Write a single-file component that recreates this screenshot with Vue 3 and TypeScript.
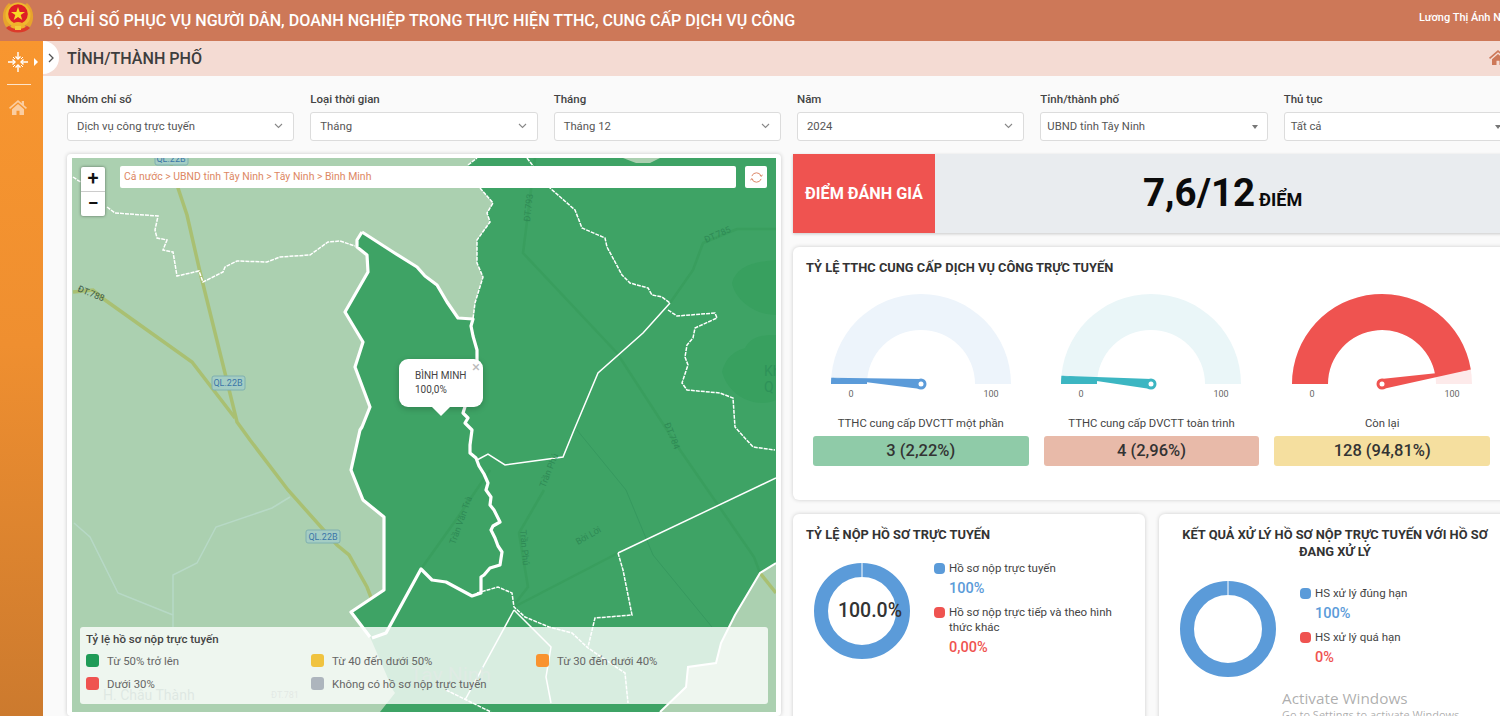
<script setup lang="ts">
// du lieu bo loc
const filters = [
  { label: 'Nhóm chỉ số', value: 'Dịch vụ công trực tuyến', kind: 'chevron' },
  { label: 'Loại thời gian', value: 'Tháng', kind: 'chevron' },
  { label: 'Tháng', value: 'Tháng 12', kind: 'chevron' },
  { label: 'Năm', value: '2024', kind: 'chevron' },
  { label: 'Tỉnh/thành phố', value: 'UBND tỉnh Tây Ninh', kind: 'caret' },
  { label: 'Thủ tục', value: 'Tất cả', kind: 'caret' },
]

const legend = [
  { label: 'Từ 50% trở lên', color: '#1f9b57' },
  { label: 'Từ 40 đến dưới 50%', color: '#f0c33f' },
  { label: 'Từ 30 đến dưới 40%', color: '#f9932f' },
  { label: 'Dưới 30%', color: '#ef5350' },
  { label: 'Không có hồ sơ nộp trực tuyến', color: '#adb5bd' },
]

// toa do ban do tinh theo trang, viewBox bat dau tu 72 158
const darkArea =
  '362,232 393,252 417,267 437,285 458,318 473,319 475,303 483,277 477,263 477,240 490,222 487,213 493,203 480,188 468,165 477,158 776,158 776,563 760,573 735,615 721,643 716,663 688,667 686,687 660,712 380,712 395,693 393,690 380,660 370,637 351,612 384,590 384,517 363,500 351,470 360,430 362,427 370,407 355,367 363,342 345,312 368,272 367,255 357,247 357,240'

const thickLines = [
  '362,232 393,252 417,267 425,276 437,285 447,302 458,318 473,319 471,326 473,336 477,350 477,363 472,385 463,413 468,418 465,423 472,430 470,445 470,453 476,458 479,466 484,474 488,483 486,490 491,497 490,505 494,510 500,522 493,526 491,530 495,538 498,546 502,552 500,565 490,568 484,575 481,577 481,593 472,596 446,582 432,580 421,569 386,633 372,638',
  '362,232 357,240 357,247 367,255 368,272 345,312 363,342 355,367 370,407 362,427 360,430 351,470 363,500 384,517 384,590 351,612 370,637',
]
const mediumLines = ['776,563 760,573 735,615 721,643 716,663 688,667 686,687 660,712']
const solidLines = [
  '670,303 643,333 598,373 574,430 563,457 505,465 488,454 477,460',
  '776,478 618,553',
  '514,610 465,700',
  '514,610 551,647 546,677 551,703',
]
const dashedLines = [
  '73,177 82,183',
  '107,207 115,213 158,216 155,230 157,238 167,240 163,250 173,252 177,276 199,271 203,282 223,272 225,267 237,261 267,262 280,257 310,255 328,242 340,241 355,246',
  '468,165 477,158',
  '480,188 493,203 487,213 490,222 477,240 477,263 483,277 475,303 473,319',
  '527,158 550,188 575,210 582,228 605,238 607,247 622,275 630,283 648,288 652,295 662,297 670,303',
  '668,310 677,316 715,313 717,318 695,328 693,338 687,345 685,357 688,365 682,383 687,390 720,393 733,398 735,427 753,447 775,450',
  '618,553 623,570 632,615 595,618 588,647',
  '477,593 498,587 512,593 514,607 525,617 549,627 572,633 588,648 625,673 628,703',
  '446,690 491,712',
]
const lightRoads = [
  '171,165 178,188 187,215 200,272 225,373 237,422 250,440 288,490 337,545 349,555 367,587 381,623',
  '73,292 93,290 105,300 192,362 235,418',
  '760,573 776,593',
]
const darkRoads = [
  '535,158 523,253 617,353 680,450 754,557 760,573',
  '670,303 693,270 703,243 737,229 776,229',
  '514,607 618,553',
  '421,569 458,517 490,470',
  '544,490 519,533 528,587 514,605',
]
const darkStreams = ['577,430 626,490 653,555 712,627']
const streams = [
  '290,497 272,508 216,527 197,563 173,575 173,627',
  '74,523 90,537 118,593 173,615',
]

// dong ho: mau va ty le lay theo so lieu
const gauges = [
  { label: 'TTHC cung cấp DVCTT một phần', value: '3 (2,22%)', rate: 0.0222, color: '#5b9bd9', bg: '#edf4fb', box: '#8fcba8' },
  { label: 'TTHC cung cấp DVCTT toàn trình', value: '4 (2,96%)', rate: 0.0296, color: '#3cb6c2', bg: '#eaf6f8', box: '#e8baa9' },
  { label: 'Còn lại', value: '128 (94,81%)', rate: 0.9481, color: '#ef5350', bg: '#fdeaea', box: '#f5df9f' },
]

const cx = 100
const cy = 96
const pt = (r: number, f: number) => {
  const a = Math.PI * (1 - f)
  return `${(cx + r * Math.cos(a)).toFixed(2)} ${(cy - r * Math.sin(a)).toFixed(2)}`
}
const band = (from: number, to: number) =>
  `M${pt(90, from)} A90 90 0 0 1 ${pt(90, to)} L${pt(54, to)} A54 54 0 0 0 ${pt(54, from)} Z`
const needle = (f: number) => {
  const a = Math.PI * (1 - f)
  const dx = 5 * Math.sin(a)
  const dy = 5 * Math.cos(a)
  return `M${cx - dx} ${cy - dy} L${pt(90, f)} L${cx + dx} ${cy + dy} Z`
}

const donuts = [
  {
    title: 'TỶ LỆ NỘP HỒ SƠ TRỰC TUYẾN',
    center: '100.0%',
    cls: 'card-left',
    items: [
      { label: 'Hồ sơ nộp trực tuyến', value: '100%', color: '#5b9bd9' },
      { label: 'Hồ sơ nộp trực tiếp và theo hình thức khác', value: '0,00%', color: '#ef5350' },
    ],
  },
  {
    title: 'KẾT QUẢ XỬ LÝ HỒ SƠ NỘP TRỰC TUYẾN VỚI HỒ SƠ ĐANG XỬ LÝ',
    center: '',
    cls: 'card-right',
    items: [
      { label: 'HS xử lý đúng hạn', value: '100%', color: '#5b9bd9' },
      { label: 'HS xử lý quá hạn', value: '0%', color: '#ef5350' },
    ],
  },
]
</script>

<template>
  <div class="app">
    <header class="topbar">
      <svg class="emblem" width="32" height="32" viewBox="0 0 32 32">
        <path d="M4 25 C-1 17 0 7 7 1 L10 4 C6 9 6 17 9 23 Z" fill="#e8a32c" />
        <path d="M28 25 C33 17 32 7 25 1 L22 4 C26 9 26 17 23 23 Z" fill="#e8a32c" />
        <circle cx="16" cy="13" r="12.500" fill="#efb92f" />
        <circle cx="16" cy="12" r="9.800" fill="#de1f26" />
        <path d="M16 5l1.700 5h5.300l-4.300 3.100 1.600 5-4.300-3.100-4.300 3.100 1.600-5L9 10h5.300z" fill="#f8d827" />
        <path d="M9 24 C11 18.500 21 18.500 23 24 L24 27 H8 Z" fill="#f0b22c" />
        <path d="M4 26 C10 32 22 32 28 26 L25 24 C21 28 11 28 7 24 Z" fill="#dc3a2a" />
        <rect x="13" y="24" width="6" height="4" fill="#f4c93c" />
      </svg>
      <span class="site-title">BỘ CHỈ SỐ PHỤC VỤ NGƯỜI DÂN, DOANH NGHIỆP TRONG THỰC HIỆN TTHC, CUNG CẤP DỊCH VỤ CÔNG</span>
      <span class="user-name">Lương Thị Ánh Nguyệt</span>
    </header>

    <div class="body-row">
      <aside class="sidebar">
        <div class="side-top">
          <svg width="22" height="22" viewBox="0 0 22 22" fill="none" stroke="#fff" stroke-width="1.400">
            <path d="M11 1v7M11 14v7M1 11h7M14 11h7" />
            <path d="M8.500 5.500L11 8l2.500-2.500M8.500 16.500L11 14l2.500 2.500M5.500 8.500L8 11l-2.500 2.500M16.500 8.500L14 11l2.500 2.500" />
            <path d="M6 6l2 2M16 6l-2 2M6 16l2-2M16 16l-2-2" stroke-width="1" />
          </svg>
          <i class="side-arrow"></i>
        </div>
        <div class="side-line"></div>
        <svg class="side-home" width="18" height="16" viewBox="0 0 24 21" fill="#fbcda0">
          <path d="M12 1L0 11.500l1.500 1.600L12 4l10.500 9.100L24 11.500l-4-3.500V2.500h-3V5.400z" />
          <path d="M4 13.500L12 6.500l8 7V21h-6v-5.500h-4V21H4z" />
        </svg>
      </aside>

      <main class="main">
        <div class="collapse-tab">
          <svg width="8" height="10" viewBox="0 0 8 10" fill="none" stroke="#555" stroke-width="1.300">
            <path d="M2 1l4 4-4 4" />
          </svg>
        </div>
        <div class="page-bar">
          <h1>TỈNH/THÀNH PHỐ</h1>
          <svg class="bar-home" width="18" height="16" viewBox="0 0 24 21" fill="#cd7858">
            <path d="M12 1L0 11.500l1.500 1.600L12 4l10.500 9.100L24 11.500l-4-3.500V2.500h-3V5.400z" />
            <path d="M4 13.500L12 6.500l8 7V21h-6v-5.500h-4V21H4z" />
          </svg>
        </div>

        <div class="content">
          <div class="filters">
            <div v-for="f in filters" :key="f.label" class="filter">
              <label>{{ f.label }}</label>
              <div class="select" :class="f.kind">
                <span>{{ f.value }}</span>
                <svg v-if="f.kind === 'chevron'" width="9" height="6" viewBox="0 0 9 6" fill="none" stroke="#888" stroke-width="1.100">
                  <path d="M1 1l3.500 3.500L8 1" />
                </svg>
                <i v-else class="caret-icon"></i>
              </div>
            </div>
          </div>

          <div class="columns">
            <section class="map-card">
              <div class="map">
                <svg class="map-svg" width="704" height="554" viewBox="72 158 704 554">
                  <rect x="72" y="158" width="704" height="554" fill="#abd0b0" />
                  <polyline v-for="s in streams" :key="s" :points="s" fill="none" stroke="#b7d9c6" stroke-width="1.500" />
                  <polyline v-for="r in lightRoads" :key="r" :points="r" fill="none" stroke="#a9c072" stroke-width="3.500" />
                  <polygon :points="darkArea" fill="#3ea365" />
                  <polygon points="623,158 660,158 650,163 636,163" fill="#abd0b0" />
                  <path d="M732 283 C736 268 750 262 776 260 V315 C755 315 735 300 732 283Z" fill="#38a05f" />
                  <path d="M722 372 C726 355 738 350 745 348 C752 335 765 335 776 335 V400 C760 408 730 400 722 372Z" fill="#38a05f" />
                  <polyline v-for="r in darkStreams" :key="r" :points="r" fill="none" stroke="#36995f" stroke-width="1" />
                  <polyline v-for="r in darkRoads" :key="r" :points="r" fill="none" stroke="#399e5e" stroke-width="2.500" />
                  <polyline v-for="l in dashedLines" :key="l" :points="l" fill="none" stroke="#fff" stroke-width="1.500" stroke-dasharray="4 1" />
                  <polyline v-for="l in solidLines" :key="l" :points="l" fill="none" stroke="#fff" stroke-width="1.500" />
                  <polyline v-for="l in mediumLines" :key="l" :points="l" fill="none" stroke="#fff" stroke-width="2" />
                  <polyline v-for="l in thickLines" :key="l" :points="l" fill="none" stroke="#fff" stroke-width="3.200" stroke-linejoin="round" />
                  <g class="shield">
                    <rect x="155" y="151" width="33" height="14" rx="2" />
                    <rect x="212" y="376" width="33" height="14" rx="2" />
                    <rect x="306" y="530" width="34" height="13" rx="2" />
                  </g>
                  <g class="shield-text">
                    <text x="171" y="162">QL.22B</text>
                    <text x="228" y="386">QL.22B</text>
                    <text x="323" y="540">QL.22B</text>
                  </g>
                  <g class="road-dark">
                    <text transform="translate(77 291) rotate(22)">ĐT.788</text>
                  </g>
                  <g class="road-green">
                    <text transform="translate(530 222) rotate(-84)">ĐT.793</text>
                    <text transform="translate(706 243) rotate(-24)">ĐT.785</text>
                    <text transform="translate(664 424) rotate(68)">ĐT.784</text>
                    <text transform="translate(455 545) rotate(-70)">Trần Văn Trà</text>
                    <text transform="translate(545 488) rotate(-68)">Trần Phú</text>
                    <text transform="translate(520 530) rotate(85)">Trần Phú</text>
                    <text transform="translate(578 545) rotate(-30)">Bời Lời</text>
                    <text class="place" x="764" y="376">Kh</text>
                    <text class="place" x="764" y="392">Q</text>
                  </g>
                  <text class="place-light" x="103" y="700">H. Châu Thành</text>
                  <text class="place-light big" x="410" y="682">Tây Ninh</text>
                  <text class="road-faint" x="271" y="698">ĐT.781</text>
                </svg>

                <div class="zoom-ctrl">
                  <span>+</span>
                  <span>−</span>
                </div>
                <div class="crumb">Cả nước &gt; UBND tỉnh Tây Ninh &gt; Tây Ninh &gt; Bình Minh</div>
                <div class="reload">
                  <svg width="13" height="13" viewBox="0 0 14 14" fill="none" stroke="#d9805e" stroke-width="1">
                    <path d="M2 5.500A5.300 5.300 0 0 1 12 5.500M12 8.500A5.300 5.300 0 0 1 2 8.500" />
                    <path d="M10.500 4.500L12.300 5.800L13.300 4M3.500 9.500L1.700 8.200L.7 10" />
                  </svg>
                </div>
                <div class="popup">
                  <span class="popup-close">×</span>
                  <div>BÌNH MINH</div>
                  <div>100,0%</div>
                </div>
                <div class="legend">
                  <div class="legend-title">Tỷ lệ hồ sơ nộp trực tuyến</div>
                  <div class="legend-grid">
                    <div v-for="l in legend" :key="l.label" class="legend-item">
                      <i :style="{ background: l.color }"></i>
                      <span>{{ l.label }}</span>
                    </div>
                  </div>
                </div>
              </div>
            </section>

            <div class="right-col">
              <section class="score">
                <div class="score-label">ĐIỂM ĐÁNH GIÁ</div>
                <div class="score-value"><b>7,6/12</b> <span>ĐIỂM</span></div>
              </section>

              <section class="card gauge-card">
                <h2>TỶ LỆ TTHC CUNG CẤP DỊCH VỤ CÔNG TRỰC TUYẾN</h2>
                <div class="gauge-row">
                  <div v-for="g in gauges" :key="g.label" class="gauge">
                    <svg width="200" height="120" viewBox="0 0 200 120">
                      <path :d="band(0, 1)" :fill="g.bg" />
                      <path :d="band(0, g.rate)" :fill="g.color" />
                      <path :d="needle(g.rate)" :fill="g.color" />
                      <circle :cx="cx" :cy="cy" r="5.500" :fill="g.color" />
                      <circle :cx="cx" :cy="cy" r="2.500" fill="#fff" />
                      <text class="tick" x="30" y="109">0</text>
                      <text class="tick" x="170" y="109">100</text>
                    </svg>
                    <div class="gauge-label">{{ g.label }}</div>
                    <div class="gauge-value" :style="{ background: g.box }">{{ g.value }}</div>
                  </div>
                </div>
              </section>

              <div class="donut-row">
                <section v-for="d in donuts" :key="d.title" class="card donut-card" :class="d.cls">
                  <h2>{{ d.title }}</h2>
                  <div class="donut-body">
                    <div class="donut">
                      <svg width="96" height="96" viewBox="0 0 96 96">
                        <circle cx="48" cy="48" r="41" fill="none" stroke="#5b9bd9" stroke-width="14" />
                        <path d="M48 0v14" stroke="#fff" stroke-width="1" />
                      </svg>
                      <span v-if="d.center" class="donut-center">{{ d.center }}</span>
                    </div>
                    <ul class="donut-legend">
                      <li v-for="it in d.items" :key="it.label">
                        <i :style="{ background: it.color }"></i>
                        <div>
                          <p>{{ it.label }}</p>
                          <strong :style="{ color: it.color }">{{ it.value }}</strong>
                        </div>
                      </li>
                    </ul>
                  </div>
                </section>
              </div>
            </div>
          </div>
        </div>
      </main>
    </div>

    <div class="activate">
      <div>Activate Windows</div>
      <small>Go to Settings to activate Windows.</small>
    </div>
  </div>
</template>

<style>
html,
body {
  margin: 0;
  overflow: hidden;
}
</style>

<style scoped>
.app {
  position: relative;
  width: 1500px;
  height: 716px;
  overflow: hidden;
  font-family: Roboto, "Liberation Sans", sans-serif;
  color: #333;
  background: #fafafa;
}

.topbar {
  height: 41px;
  background: #cd7858;
  display: flex;
  align-items: center;
  color: #fff;
  white-space: nowrap;
}

.emblem {
  margin: -6px 9px 0 2px;
  flex: none;
}

.site-title {
  font-size: 16.100px;
  font-weight: 500;
}

.user-name {
  position: absolute;
  left: 1419px;
  top: 11px;
  font-size: 11px;
  font-weight: 500;
}

.body-row {
  display: flex;
  height: 675px;
}

.sidebar {
  width: 43px;
  flex: none;
  background: linear-gradient(180deg, #f8962f 0%, #ef8f30 45%, #cc7a2e 100%);
  display: flex;
  flex-direction: column;
  align-items: center;
}

.side-top {
  position: relative;
  width: 43px;
  height: 43px;
  padding: 10px 0 0 7px;
  box-sizing: border-box;
}

.side-arrow {
  position: absolute;
  left: 34px;
  top: 17px;
  border-left: 4px solid #fff;
  border-top: 4px solid transparent;
  border-bottom: 4px solid transparent;
}

.side-line {
  width: 24px;
  height: 1px;
  background: rgba(255, 255, 255, 0.75);
  margin-right: 5px;
}

.side-home {
  margin-top: 14px;
  margin-right: 7px;
}

.main {
  position: relative;
  flex: 1;
  min-width: 0;
}

.collapse-tab {
  position: absolute;
  z-index: 2;
  left: 0;
  top: 0;
  width: 16px;
  height: 33px;
  background: #fff;
  border-radius: 0 17px 17px 0;
  display: flex;
  align-items: center;
  justify-content: center;
}

.page-bar {
  height: 35px;
  background: #f4dbd3;
  display: flex;
  align-items: center;
  padding-left: 24px;
  position: relative;
}

.page-bar h1 {
  margin: 0;
  font-size: 16.100px;
  font-weight: 500;
  color: #3d3d3d;
}

.bar-home {
  position: absolute;
  left: 1446px;
  top: 8px;
}

.content {
  width: 1444px;
  padding: 16px 0 0 24px;
}

.filters {
  display: grid;
  grid-template-columns: repeat(6, 1fr);
  gap: 16px;
}

.filter label {
  display: block;
  font-size: 11.500px;
  font-weight: 500;
  color: #444;
  line-height: 14px;
  margin-bottom: 6px;
}

.select {
  height: 29px;
  box-sizing: border-box;
  background: #fff;
  border: 1px solid #dcdcdc;
  border-radius: 3px;
  font-size: 11.300px;
  color: #555;
  display: flex;
  align-items: center;
  justify-content: space-between;
  padding: 0 10px 1px 9px;
}

.select.caret {
  padding: 0 9px 0 6px;
}

.caret-icon {
  border-top: 4px solid #777;
  border-left: 3.500px solid transparent;
  border-right: 3.500px solid transparent;
}

.columns {
  display: grid;
  grid-template-columns: 714px 718px;
  gap: 12px;
  margin-top: 13px;
}

.map-card {
  height: 562px;
  padding: 4px 5px 0 5px;
  box-sizing: border-box;
  background: #fff;
  border-radius: 4px;
  box-shadow: 0 0 4px rgba(0, 0, 0, 0.2);
}

.map {
  position: relative;
  width: 704px;
  height: 554px;
  overflow: hidden;
}

.map-svg {
  display: block;
}

.shield rect {
  fill: #a4cdc4;
  stroke: #7fb0b0;
}

.shield-text text {
  font-size: 9px;
  fill: #3b76a8;
  text-anchor: middle;
}

.road-dark text {
  font-size: 9px;
  fill: #3d5b48;
}

.road-green text {
  font-size: 9px;
  fill: #2e8a55;
}

.road-green text.place {
  font-size: 14px;
  fill: #2e9259;
}

.place-light {
  font-size: 14px;
  fill: #5a8a70;
}

.place-light.big {
  font-size: 21px;
  fill: #5f9a78;
}

.road-faint {
  font-size: 9px;
  fill: #6f8f78;
}

.zoom-ctrl {
  position: absolute;
  left: 9px;
  top: 9px;
  width: 24px;
  background: #fff;
  border-radius: 2px;
  box-shadow: 0 0 3px rgba(0, 0, 0, 0.5);
  color: #111;
}

.zoom-ctrl span {
  display: block;
  height: 24px;
  line-height: 23px;
  text-align: center;
  font-size: 20px;
  font-weight: 500;
}

.zoom-ctrl span:first-child {
  border-bottom: 1px solid #ccc;
}

.crumb {
  position: absolute;
  left: 48px;
  top: 8px;
  width: 616px;
  height: 22px;
  box-sizing: border-box;
  padding-left: 4px;
  line-height: 22px;
  background: #fff;
  border-radius: 2px;
  font-size: 10.450px;
  color: #dd8763;
}

.reload {
  position: absolute;
  left: 673px;
  top: 8px;
  width: 22px;
  height: 22px;
  background: #fff;
  border-radius: 2px;
  display: flex;
  align-items: center;
  justify-content: center;
}

.popup {
  position: absolute;
  left: 327px;
  top: 201px;
  width: 84px;
  height: 48px;
  box-sizing: border-box;
  padding: 10px 0 0 16px;
  background: #fff;
  border-radius: 9px;
  box-shadow: 0 2px 6px rgba(0, 0, 0, 0.2);
  font-size: 10px;
  line-height: 14px;
  color: #444;
}

.popup::after {
  content: "";
  position: absolute;
  left: 33px;
  top: 48px;
  border-top: 9px solid #fff;
  border-left: 9px solid transparent;
  border-right: 9px solid transparent;
}

.popup-close {
  position: absolute;
  right: 3px;
  top: 1px;
  font-size: 15px;
  color: #bbb;
}

.legend {
  position: absolute;
  left: 8px;
  top: 469px;
  width: 688px;
  height: 77px;
  box-sizing: border-box;
  padding: 5px 6px;
  background: rgba(255, 255, 255, 0.8);
  border-radius: 3px;
}

.legend-title {
  font-size: 11.500px;
  font-weight: 500;
  line-height: 14px;
  color: #444;
  margin-bottom: 8px;
}

.legend-grid {
  display: grid;
  grid-template-columns: 225px 225px 225px;
  row-gap: 10px;
}

.legend-item {
  display: flex;
  align-items: center;
  gap: 8px;
  height: 13px;
  font-size: 11.400px;
  color: #666;
}

.legend-item i {
  width: 13px;
  height: 13px;
  border-radius: 3px;
  flex: none;
}

.right-col {
  display: flex;
  flex-direction: column;
  gap: 14px;
}

.score {
  height: 79px;
  display: flex;
  background: #e9ecef;
  box-shadow: 0 1px 3px rgba(0, 0, 0, 0.2);
}

.score-label {
  width: 142px;
  background: #ef5350;
  color: #fff;
  font-size: 16.200px;
  font-weight: 700;
  display: flex;
  align-items: center;
  justify-content: center;
  white-space: nowrap;
}

.score-value {
  flex: 1;
  padding: 16px 0 0 208px;
  color: #0b0b0b;
  white-space: nowrap;
}

.score-value b {
  font-size: 38.500px;
  font-weight: 700;
}

.score-value span {
  font-size: 18px;
  font-weight: 700;
}

.card {
  background: #fff;
  border-radius: 6px;
  box-shadow: 0 0 4px rgba(0, 0, 0, 0.18);
}

.card h2 {
  margin: 0;
  font-size: 12.850px;
  font-weight: 700;
  line-height: 17px;
  color: #333;
}

.gauge-card {
  height: 253px;
  box-sizing: border-box;
  padding: 12px 21px 0 13px;
}

.gauge-row {
  display: grid;
  grid-template-columns: repeat(3, 1fr);
  gap: 15px;
  margin: 12px 0 0 7px;
}

.gauge {
  text-align: center;
}

.gauge svg {
  display: block;
  margin: 0 auto;
}

.tick {
  font-size: 9px;
  fill: #666;
  text-anchor: middle;
}

.gauge-label {
  font-size: 11.300px;
  line-height: 14px;
  color: #444;
  margin-top: 9px;
}

.gauge-value {
  height: 30px;
  line-height: 30px;
  margin-top: 5px;
  border-radius: 3px;
  font-size: 16.500px;
  font-weight: 500;
  color: #333;
}

.donut-row {
  display: grid;
  grid-template-columns: 352px 352px;
  gap: 14px;
}

.donut-card {
  height: 220px;
  box-sizing: border-box;
  padding: 12px 13px 0;
}

.card-right h2 {
  text-align: center;
}

.donut-body {
  display: flex;
  margin-top: 20px;
  padding-left: 8px;
  gap: 24px;
}

.card-right .donut-body {
  margin-top: 21px;
}

.donut {
  position: relative;
  width: 96px;
  height: 96px;
  flex: none;
}

.donut svg {
  display: block;
}

.donut-center {
  position: absolute;
  left: 16px;
  right: 0;
  top: 36px;
  text-align: center;
  font-size: 19.500px;
  font-weight: 500;
  line-height: 24px;
  white-space: nowrap;
}

.donut-legend {
  list-style: none;
  margin: -2px 0 0;
  padding: 0;
  width: 195px;
}

.card-right .donut-legend {
  margin-top: 5px;
  width: 200px;
}

.donut-legend li {
  display: flex;
  gap: 4px;
  margin-bottom: 7px;
}

.donut-legend i {
  width: 11px;
  height: 11px;
  border-radius: 4px;
  margin-top: 2px;
  flex: none;
}

.donut-legend p {
  margin: 0;
  font-size: 11.500px;
  line-height: 15px;
  color: #444;
}

.donut-legend strong {
  display: block;
  margin-top: 4px;
  font-size: 14.500px;
  font-weight: 500;
  line-height: 18px;
}

.activate {
  position: absolute;
  left: 1282px;
  top: 688px;
  color: rgba(120, 120, 120, 0.6);
  font-family: "Open Sans", sans-serif;
  font-size: 15.300px;
  line-height: 20px;
  white-space: nowrap;
}

.activate small {
  display: block;
  font-size: 11px;
  line-height: 14px;
}
</style>
